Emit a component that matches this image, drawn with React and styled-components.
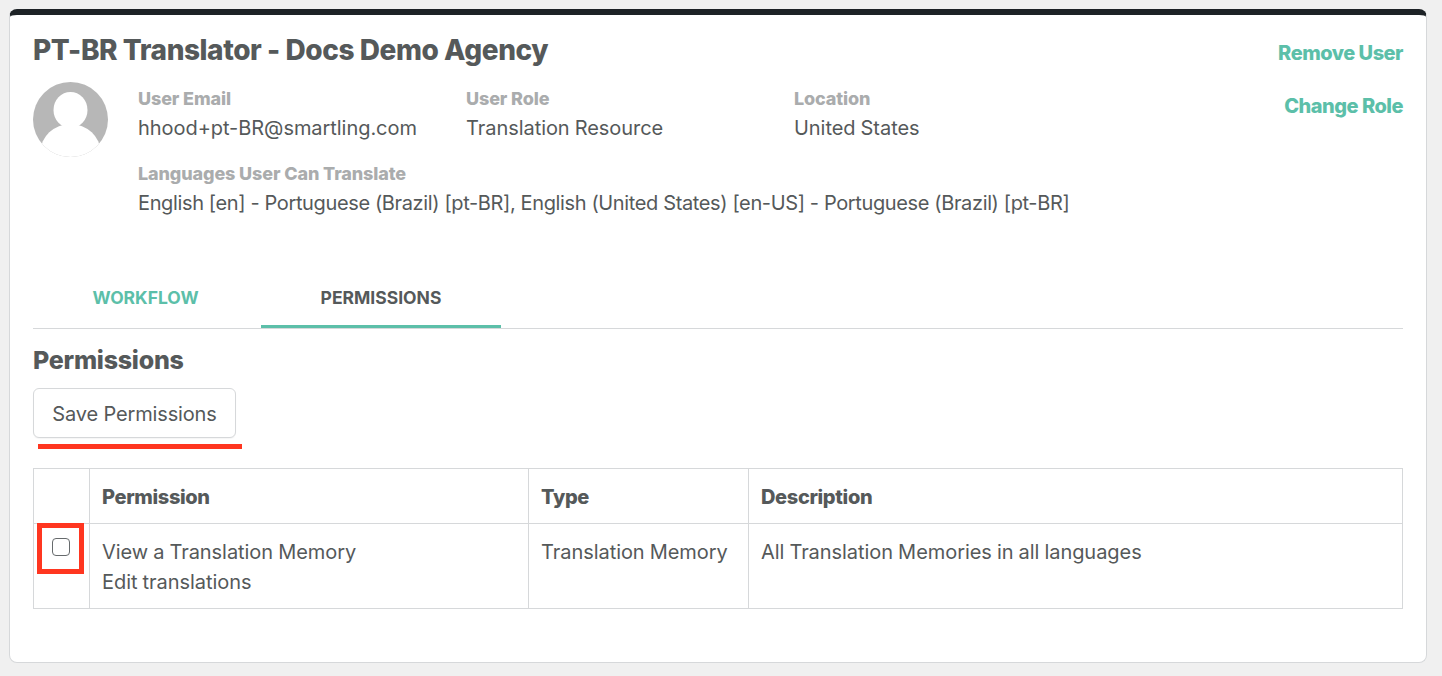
import React from "react";
import styled, { createGlobalStyle } from "styled-components";

const GlobalStyle = createGlobalStyle`
  html, body {
    margin: 0;
    padding: 0;
    background: #f0f0f0;
    font-family: "Inter", "Liberation Sans", sans-serif;
    color: #55595a;
  }
`;

const Page = styled.div`
  padding: 9px 15px 13px 9px;
`;

const Card = styled.section`
  height: 654px;
  box-sizing: border-box;
  background: #fff;
  border: 1px solid #d6d8da;
  border-top: 6px solid #1d2226;
  border-radius: 8px;
  padding: 0 23px;
`;

const Header = styled.div`
  display: flex;
  justify-content: space-between;
  height: 243px;
`;

const Info = styled.div`
  min-width: 0;
`;

const Title = styled.h1`
  margin: 0;
  padding-top: 15px;
  font-size: 28px;
  line-height: 40px;
  font-weight: 800;
  letter-spacing: -0.43px;
  color: #55595a;
`;

const Profile = styled.div`
  display: flex;
  margin-top: 12px;
  gap: 30px;
`;

const Avatar = styled.svg`
  width: 75px;
  height: 75px;
  flex: none;
`;

const Fields = styled.div`
  display: grid;
  grid-template-columns: repeat(3, 328px);
  row-gap: 15px;
  padding-top: 1px;
`;

const Field = styled.div`
  grid-column: ${(p) => (p.$wide ? "1 / -1" : "auto")};
  white-space: nowrap;
`;

const Label = styled.div`
  font-size: 18px;
  line-height: 30px;
  font-weight: 800;
  letter-spacing: -0.12px;
  color: #aaacad;
  padding-top: 1px;
  margin-bottom: -1px;
`;

const Value = styled.div`
  font-size: 20px;
  line-height: 30px;
  letter-spacing: ${(p) => (p.$tight ? "-0.37px" : "-0.05px")};
  word-spacing: ${(p) => (p.$tight ? "0" : "-0.5px")};
  color: #55595a;
`;

const Actions = styled.div`
  display: flex;
  flex-direction: column;
  align-items: flex-end;
  gap: 23px;
  padding-top: 23px;
`;

const ActionLink = styled.a`
  font-size: 20px;
  line-height: 30px;
  font-weight: 800;
  letter-spacing: -0.5px;
  color: #5cbfa9;
`;

const Tabs = styled.div`
  display: flex;
  height: 71px;
  box-sizing: border-box;
  align-items: stretch;
  border-bottom: 1px solid #d6d8da;
`;

const Tab = styled.div`
  width: ${(p) => p.$width}px;
  box-sizing: border-box;
  display: flex;
  align-items: center;
  justify-content: center;
  padding-top: 12px;
  padding-right: ${(p) => (p.$active ? "0" : "3px")};
  font-size: 17.5px;
  font-weight: 700;
  color: ${(p) => (p.$active ? "#55595a" : "#5cbfa9")};
  border-bottom: 3px solid ${(p) => (p.$active ? "#5cbfa9" : "transparent")};
`;

const SectionTitle = styled.h2`
  margin: 14px 0 11px;
  font-size: 25px;
  line-height: 34px;
  font-weight: 800;
  letter-spacing: -0.25px;
  color: #55595a;
`;

const ButtonWrap = styled.div`
  position: relative;
  width: 203px;
`;

const SaveButton = styled.button`
  display: block;
  width: 203px;
  height: 50px;
  padding: 2px 0 0;
  background: #fff;
  border: 1px solid #d6d8da;
  border-radius: 6px;
  box-shadow: 0 1px 1px rgba(0, 0, 0, 0.04);
  font-family: inherit;
  font-size: 20px;
  letter-spacing: -0.15px;
  color: #55595a;
`;

const RedLine = styled.div`
  position: absolute;
  left: 5px;
  top: 56px;
  width: 204px;
  height: 5px;
  background: #ff3620;
`;

const Table = styled.table`
  width: 1370px;
  margin-top: 30px;
  border-collapse: collapse;
  table-layout: fixed;
  font-size: 20px;
  line-height: 30px;
  letter-spacing: -0.05px;
  word-spacing: -0.5px;
  color: #55595a;

  th, td {
    border: 1px solid #d6d8da;
    padding: 13px 12px 0;
    text-align: left;
    vertical-align: top;
  }

  th {
    height: 55px;
    box-sizing: border-box;
    font-weight: 800;
    letter-spacing: -0.35px;
  }

  td {
    height: 85px;
    box-sizing: border-box;
  }
`;

const CheckCell = styled.td`
  position: relative;
`;

const Checkbox = styled.span`
  position: absolute;
  left: 18px;
  top: 14px;
  width: 18px;
  height: 18px;
  box-sizing: border-box;
  border: 1.5px solid #666a6c;
  border-radius: 4px;
  background: #fff;
`;

const RedBox = styled.div`
  position: absolute;
  left: 3px;
  top: -1px;
  width: 47px;
  height: 51px;
  box-sizing: border-box;
  border: 5px solid #ff3620;
`;

const App = () => {
  const fields = [
    { label: "User Email", value: "hhood+pt-BR@smartling.com" },
    { label: "User Role", value: "Translation Resource" },
    { label: "Location", value: "United States" },
  ];

  return (
    <>
      <GlobalStyle />
      <Page>
        <Card>
          <Header>
            <Info>
              <Title>PT-BR Translator - Docs Demo Agency</Title>
              <Profile>
                <Avatar viewBox="0 0 75 75">
                  <defs>
                    <clipPath id="avatar-clip">
                      <circle cx="37.5" cy="37.5" r="37.5" />
                    </clipPath>
                  </defs>
                  <g clipPath="url(#avatar-clip)">
                    <rect width="75" height="75" fill="#b7b7b7" />
                    <ellipse cx="37.5" cy="28" rx="17" ry="18" fill="#fff" />
                    <ellipse cx="37.5" cy="70" rx="30" ry="28" fill="#fff" />
                  </g>
                </Avatar>
                <Fields>
                  {fields.map((f) => (
                    <Field key={f.label}>
                      <Label>{f.label}</Label>
                      <Value>{f.value}</Value>
                    </Field>
                  ))}
                  <Field $wide>
                    <Label>Languages User Can Translate</Label>
                    <Value $tight>
                      English [en] - Portuguese (Brazil) [pt-BR], English (United States) [en-US] - Portuguese (Brazil) [pt-BR]
                    </Value>
                  </Field>
                </Fields>
              </Profile>
            </Info>
            <Actions>
              <ActionLink>Remove User</ActionLink>
              <ActionLink>Change Role</ActionLink>
            </Actions>
          </Header>
          <Tabs>
            <Tab $width={228}>WORKFLOW</Tab>
            <Tab $width={240} $active>PERMISSIONS</Tab>
          </Tabs>
          <SectionTitle>Permissions</SectionTitle>
          <ButtonWrap>
            <SaveButton>Save Permissions</SaveButton>
            <RedLine />
          </ButtonWrap>
          <Table>
            <colgroup>
              <col style={{ width: 56 }} />
              <col style={{ width: 439 }} />
              <col style={{ width: 220 }} />
              <col />
            </colgroup>
            <thead>
              <tr>
                <th />
                <th>Permission</th>
                <th>Type</th>
                <th>Description</th>
              </tr>
            </thead>
            <tbody>
              <tr>
                <CheckCell>
                  <Checkbox />
                  <RedBox />
                </CheckCell>
                <td>
                  View a Translation Memory
                  <br />
                  Edit translations
                </td>
                <td>Translation Memory</td>
                <td>All Translation Memories in all languages</td>
              </tr>
            </tbody>
          </Table>
        </Card>
      </Page>
    </>
  );
};

export default App;
